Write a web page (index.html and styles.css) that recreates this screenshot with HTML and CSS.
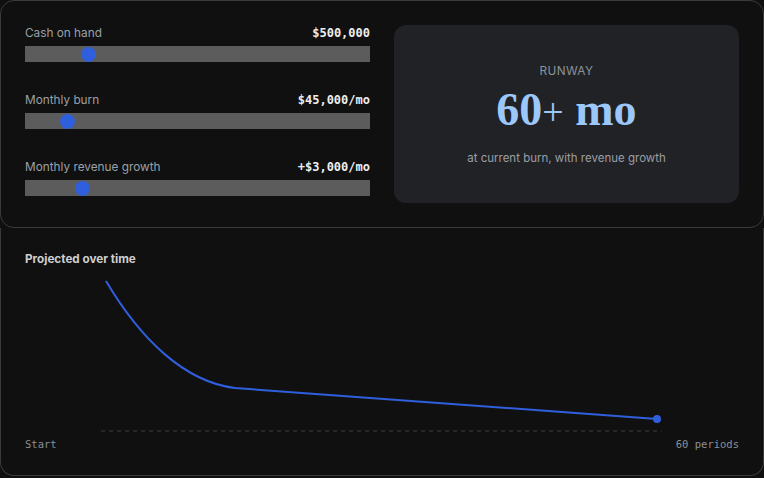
FILE: index.html
```html
<!doctype html>
<html>
  <head>
    <title>Runway</title>
    <link rel="stylesheet" href="styles.css">
  </head>
  <body>
    <section class="card card-top">
      <div class="controls">
        <div class="field">
          <div class="field-head">
            <span class="field-label">Cash on hand</span>
            <span class="field-value">$500,000</span>
          </div>
          <div class="track"><span class="thumb" style="left: 18.3%"></span></div>
        </div>
        <div class="field">
          <div class="field-head">
            <span class="field-label">Monthly burn</span>
            <span class="field-value">$45,000/mo</span>
          </div>
          <div class="track"><span class="thumb" style="left: 12.2%"></span></div>
        </div>
        <div class="field">
          <div class="field-head">
            <span class="field-label">Monthly revenue growth</span>
            <span class="field-value">+$3,000/mo</span>
          </div>
          <div class="track"><span class="thumb" style="left: 16.8%"></span></div>
        </div>
      </div>

      <div class="runway">
        <div class="runway-label">RUNWAY</div>
        <div class="runway-value">60<span class="plus">+</span> mo</div>
        <div class="runway-note">at current burn, with revenue growth</div>
      </div>
    </section>

    <section class="card card-bottom">
      <h2>Projected over time</h2>
      <svg class="chart" width="714" height="165" viewBox="0 0 714 165">
        <line x1="76" y1="161" x2="637" y2="161" class="baseline"/>
        <path d="M81 11 C116 70 160 112 210 118 L632 149" class="curve"/>
        <circle cx="632" cy="149" r="4" class="dot"/>
      </svg>
      <div class="axis">
        <span>Start</span>
        <span>60 periods</span>
      </div>
    </section>
  </body>
</html>
```

FILE: styles.css
```css
:root {
  --bg: #101010;
  --border: #3a3a3a;
  --panel: #212225;
  --track: #5c5c5c;
  --blue: #2f5fdc;
  --muted: #9ba0a7;
  --value: #eeeeee;
}

body {
  margin: 0;
  background: var(--bg);
  font-family: Inter, 'Noto Sans', sans-serif;
  color: var(--muted);
}

.card {
  border: 1px solid var(--border);
  background: var(--bg);
  padding: 24px;
}

.card-top {
  display: grid;
  grid-template-columns: 1fr 1fr;
  gap: 24px;
  border-radius: 14px;
}

.card-bottom {
  border-top: none;
  border-radius: 0 0 14px 14px;
  padding-top: 24px;
}

/* sliders */
.controls {
  display: flex;
  flex-direction: column;
  gap: 30px;
  padding-bottom: 7px;
}

.field-head {
  display: flex;
  justify-content: space-between;
  align-items: baseline;
  height: 16px;
  line-height: 16px;
  margin-bottom: 5px;
}

.field-label {
  font-size: 11.8px;
  color: var(--muted);
}

.field-value {
  font-family: 'DejaVu Sans Mono', monospace;
  font-weight: bold;
  font-size: 12px;
  color: var(--value);
}

.track {
  position: relative;
  height: 16px;
  background: var(--track);
}

.thumb {
  position: absolute;
  top: 0.5px;
  width: 15px;
  height: 15px;
  margin-left: -7.5px;
  border-radius: 50%;
  background: var(--blue);
}

/* runway panel */
.runway {
  display: flex;
  flex-direction: column;
  align-items: center;
  justify-content: center;
  background: var(--panel);
  border-radius: 12px;
}

.runway-label {
  font-size: 11.8px;
  line-height: 14px;
  letter-spacing: 0.4px;
  color: #8a929c;
}

.runway-value {
  margin-top: 9px;
  font-family: 'Liberation Serif', serif;
  font-weight: bold;
  font-size: 46px;
  line-height: 46px;
  color: #9cc7fa;
}

.runway-value .plus {
  font-size: 38px;
  font-weight: normal;
}

.runway-note {
  margin-top: 16px;
  font-size: 11.5px;
  line-height: 14px;
  color: #9a9ea5;
}

/* chart */
h2 {
  margin: 0 0 4px;
  font-size: 11.7px;
  line-height: 14px;
  font-weight: bold;
  color: #cfcfcf;
}

.chart {
  display: block;
}

.baseline {
  stroke: #3c3c3c;
  stroke-width: 1;
  stroke-dasharray: 4 4;
}

.curve {
  fill: none;
  stroke: var(--blue);
  stroke-width: 2;
}

.dot {
  fill: var(--blue);
}

.axis {
  display: flex;
  justify-content: space-between;
  margin-top: 2px;
  font-family: 'DejaVu Sans Mono', monospace;
  font-size: 10.5px;
  line-height: 14px;
  color: #8a8f96;
}
```
